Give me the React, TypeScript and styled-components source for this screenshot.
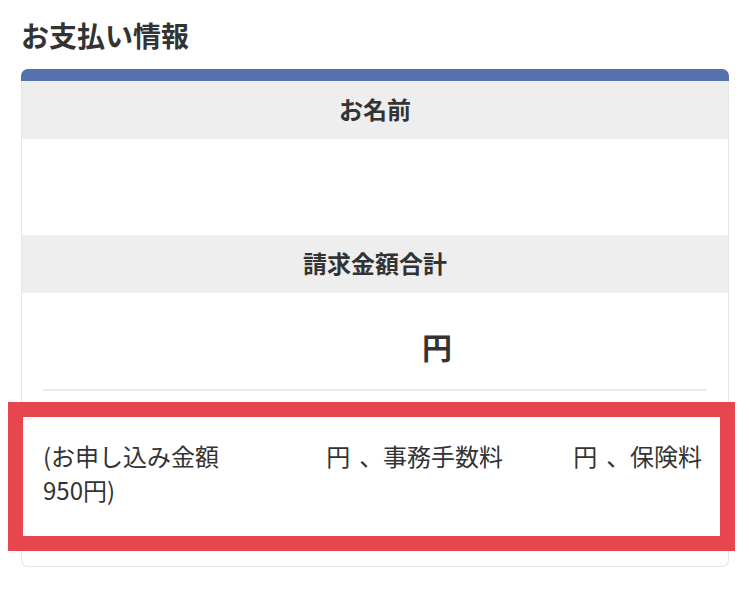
import styled, { createGlobalStyle } from "styled-components"

const GlobalStyle = createGlobalStyle`
  html, body {
    margin: 0;
    padding: 0;
    background: #ffffff;
  }
  body {
    font-family: "Noto Sans CJK JP", "Noto Sans", sans-serif;
    color: #333333;
  }
`

const Page = styled.div`
  width: 750px;
  height: 593px;
  box-sizing: border-box;
  padding: 18px 21px 0 21px;
  overflow: hidden;
`

const Title = styled.h2`
  margin: 0 0 17px 0;
  font-size: 28px;
  line-height: 34px;
  font-weight: 700;
  color: #333333;
`

const Card = styled.section`
  width: 708px;
  box-sizing: border-box;
  border: 1px solid #e6e6e6;
  border-top: none;
  border-radius: 7px;
`

const TopBar = styled.div`
  height: 12px;
  margin: 0 -1px;
  background: #5571ae;
  border-radius: 7px 7px 0 0;
`

const HeadRow = styled.div`
  height: 58px;
  display: flex;
  align-items: center;
  justify-content: center;
  background: #eeeeee;
  font-size: 24px;
  font-weight: 700;
  color: #333333;
  padding-bottom: 3px;
  box-sizing: border-box;
`

const ValueRow = styled.div<{ $h: number }>`
  height: ${({ $h }) => $h}px;
  display: flex;
  align-items: center;
  justify-content: center;
`

const AmountWrap = styled.div`
  padding: 0 21px;
`

const AmountInner = styled.div`
  height: 98px;
  box-sizing: border-box;
  padding-top: 10px;
  display: flex;
  align-items: center;
  justify-content: center;
  border-bottom: 2px solid #ececec;
  font-size: 30px;
  font-weight: 700;
  color: #333333;
`

const Blank = styled.span<{ $w: number }>`
  display: inline-block;
  width: ${({ $w }) => $w}px;
`

const Note = styled.div`
  position: relative;
  padding: 48px 21px 59px 21px;
  font-size: 24px;
  line-height: 34px;
  color: #333333;
`

const Highlight = styled.div`
  position: absolute;
  top: 11px;
  left: -14px;
  width: 727px;
  height: 149px;
  box-sizing: border-box;
  border: 15px solid #e8464f;
  pointer-events: none;
`

export default function App() {
  return (
    <>
      <GlobalStyle />
      <Page>
        <Title>お支払い情報</Title>
        <Card>
          <TopBar />
          <HeadRow>お名前</HeadRow>
          <ValueRow $h={96} />
          <HeadRow>請求金額合計</HeadRow>
          <AmountWrap>
            <AmountInner>
              <Blank $w={124} />
              円
            </AmountInner>
          </AmountWrap>
          <Note>
            (お申し込み金額<Blank $w={107} />円<Blank $w={9} />、事務手数料<Blank $w={70} />円<Blank $w={9} />、保険料
            <br />
            950円)
            <Highlight />
          </Note>
        </Card>
      </Page>
    </>
  )
}
